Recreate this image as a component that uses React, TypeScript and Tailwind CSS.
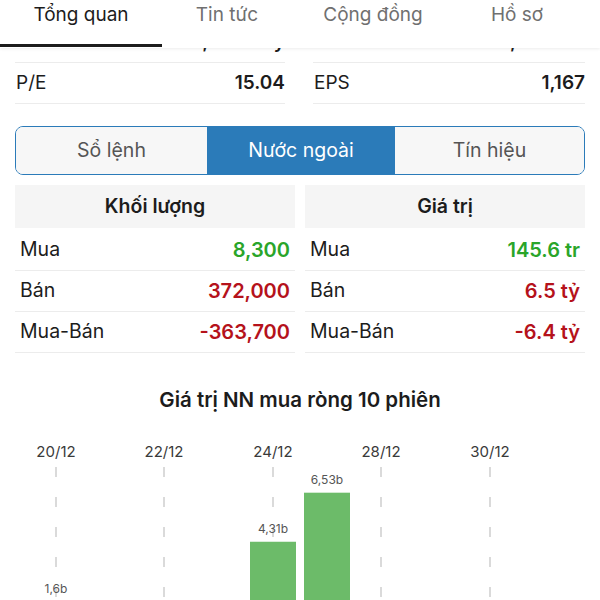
import React from 'react';

const tabs = [
  { label: 'Tổng quan', w: 'w-[162px]', active: true },
  { label: 'Tin tức', w: 'w-[130px]', active: false },
  { label: 'Cộng đồng', w: 'w-[162px]', active: false },
  { label: 'Hồ sơ', w: 'w-[126px]', active: false },
];

const StatRow = ({ label, value }: { label: string; value: string }) => (
  <div className="h-[41px] flex items-center justify-between border-b border-[#ececec] text-[19px] text-[#1c1c1c]">
    <span className="pl-[1px]">{label}</span>
    <span className="font-semibold">{value}</span>
  </div>
);

const TradeRow = ({ label, value, color }: { label: string; value: string; color: string }) => (
  <div className="h-[41px] flex items-center justify-between border-b border-[#ececec] pl-[5px] pr-[5px] text-[19.5px] text-[#1c1c1c]">
    <span>{label}</span>
    <span className={`font-semibold text-[20px] ${color}`}>{value}</span>
  </div>
);

const dates = [
  { x: 56, label: '20/12' },
  { x: 164, label: '22/12' },
  { x: 273, label: '24/12' },
  { x: 381, label: '28/12' },
  { x: 490, label: '30/12' },
];

const bars = [
  { x: 273, value: 4.31, label: '4,31b' },
  { x: 327, value: 6.53, label: '6,53b' },
  { x: 56, value: 1.6, label: '1,6b' },
];

const NetBuyChart = () => {
  const base = 207;
  const scale = 22.1;
  return (
    <svg width="600" height="170" className="block">
      {dates.map((d) => (
        <g key={d.label}>
          <text x={d.x} y={27} textAnchor="middle" fontSize="15" fill="#3a3a3a">
            {d.label}
          </text>
          <line x1={d.x} y1={37} x2={d.x} y2={170} stroke="#b5b5b5" strokeWidth="1" strokeDasharray="10 20" />
        </g>
      ))}
      {bars.map((b) => {
        const top = base - b.value * scale;
        return (
          <g key={b.label}>
            <rect x={b.x - 23} y={top} width={46} height={base - top} fill="#6cbb69" />
            <text x={b.x} y={top - 9} textAnchor="middle" fontSize="12" fill="#555">
              {b.label}
            </text>
          </g>
        );
      })}
    </svg>
  );
};

export default function App() {
  return (
    <div className="relative w-[600px] h-[600px] overflow-hidden bg-white font-['Inter',sans-serif]">
      {/* Sticky tab header */}
      <div className="absolute top-0 left-0 right-0 h-[48px] z-10 bg-white shadow-[0_1px_3px_rgba(0,0,0,0.08)] flex">
        {tabs.map((t) => (
          <div
            key={t.label}
            className={`${t.w} h-full flex justify-center pt-[1px] text-[19px] ${t.active ? 'text-[#1c1c1c]' : 'text-[#707070]'}`}
          >
            {t.label}
          </div>
        ))}
        <div className="absolute left-0 bottom-[1px] w-[162px] h-[3px] bg-[#1c1c1c]" />
      </div>

      <div className="pt-[22px]">
        {/* Overview stats */}
        <div className="grid grid-cols-[270px_272px] gap-x-[28px] px-[15px]">
          <div>
            <StatRow label="Vốn hóa" value="11,066.5 tỷ" />
            <StatRow label="P/E" value="15.04" />
          </div>
          <div>
            <StatRow label="SLCP" value="2,341.0 tr" />
            <StatRow label="EPS" value="1,167" />
          </div>
        </div>

        {/* Segmented control */}
        <div className="mt-[22px] mx-[15px] h-[49px] flex border border-[#2b7bb9] rounded-[8px] overflow-hidden text-[19.5px]">
          <div className="w-[191px] flex items-center justify-center bg-[#f7f7f7] text-[#555]">Sổ lệnh</div>
          <div className="w-[188px] flex items-center justify-center bg-[#2b7bb9] text-white">Nước ngoài</div>
          <div className="flex-1 flex items-center justify-center bg-[#f7f7f7] text-[#555]">Tín hiệu</div>
        </div>

        {/* Foreign trading */}
        <div className="mt-[10px] grid grid-cols-2 gap-x-[10px] px-[15px]">
          <div>
            <div className="h-[43px] flex items-center justify-center bg-[#f5f5f5] text-[19.5px] font-semibold text-[#1c1c1c]">
              Khối lượng
            </div>
            <div className="mt-[2px]">
              <TradeRow label="Mua" value="8,300" color="text-[#2aa52a]" />
              <TradeRow label="Bán" value="372,000" color="text-[#b5121b]" />
              <TradeRow label="Mua-Bán" value="-363,700" color="text-[#b5121b]" />
            </div>
          </div>
          <div>
            <div className="h-[43px] flex items-center justify-center bg-[#f5f5f5] text-[19.5px] font-semibold text-[#1c1c1c]">
              Giá trị
            </div>
            <div className="mt-[2px]">
              <TradeRow label="Mua" value="145.6 tr" color="text-[#2aa52a]" />
              <TradeRow label="Bán" value="6.5 tỷ" color="text-[#b5121b]" />
              <TradeRow label="Mua-Bán" value="-6.4 tỷ" color="text-[#b5121b]" />
            </div>
          </div>
        </div>

        <div className="mt-[35px] text-center text-[20.5px] font-semibold text-[#1c1c1c] leading-[24px]">
          Giá trị NN mua ròng 10 phiên
        </div>

        <div className="mt-[18px]">
          <NetBuyChart />
        </div>
      </div>
    </div>
  );
}
